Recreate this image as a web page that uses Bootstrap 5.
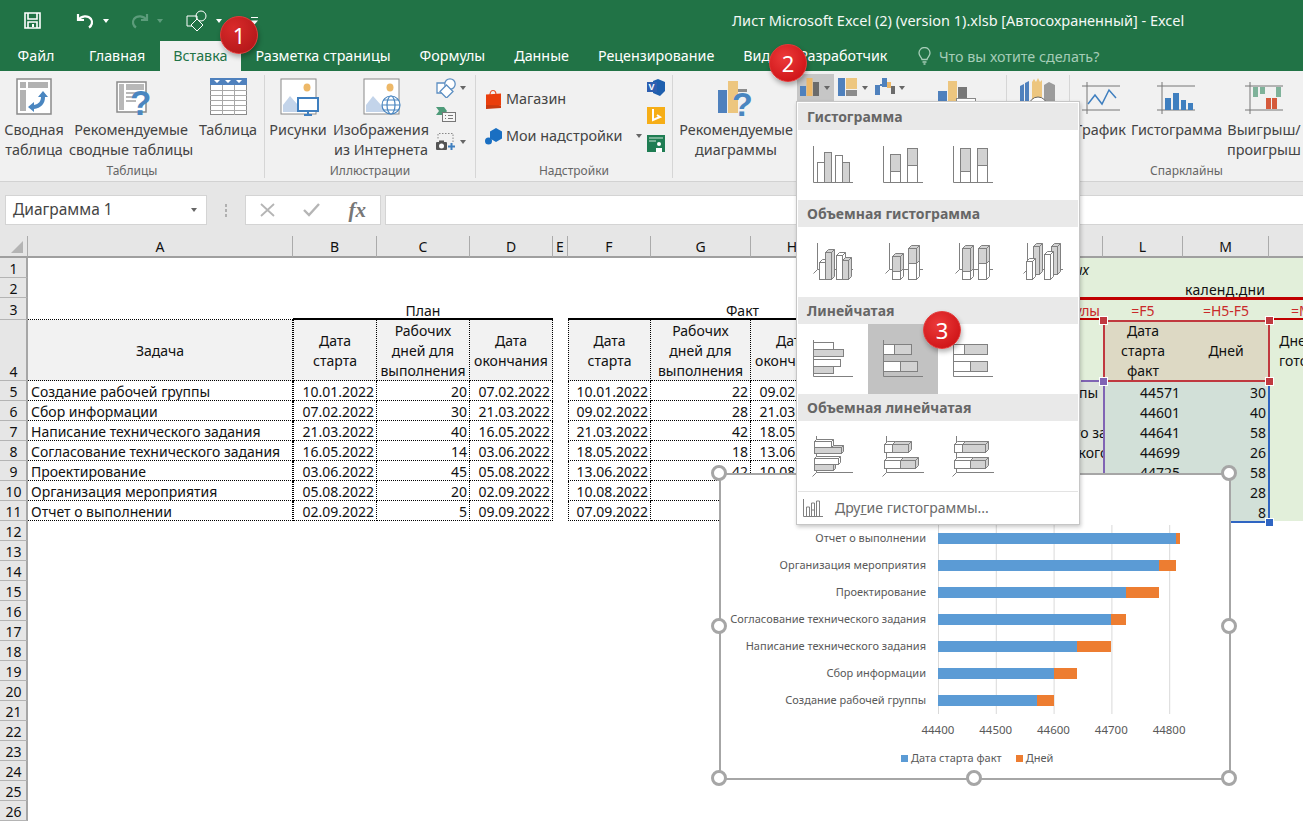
<!DOCTYPE html>
<html lang="ru">
<head>
    <meta charset="UTF-8">
    <title>Лист Microsoft Excel</title>
    <link href="https://cdn.jsdelivr.net/npm/bootstrap@5.3.0/dist/css/bootstrap.min.css" rel="stylesheet">
    <style>
        html, body { margin: 0; background: #fff; overflow: hidden; }
        #xl-app { position: relative; width: 1303px; height: 822px; overflow: hidden; font-family: "Noto Sans", sans-serif; font-size: 13.5px; color: #222; }

        /* title + tabs */
        .xl-title { height: 41px; background: #217346; color: #fff; }
        .xl-qat { width: 732px; flex: none; height: 41px; }
        .xl-title-text { font-size: 14.5px; color: #f4f8f5; white-space: nowrap; }
        .xl-tabs { height: 30px; background: #217346; padding-left: 3px; flex-wrap: nowrap; }
        .xl-tabs .nav-link { padding: 0 14.5px; height: 30px; line-height: 29px; color: #fff; font-size: 14.3px; white-space: nowrap; }
        .xl-tabs .nav-link.active { background: #f1f1f1; color: #217346; padding: 0 13.5px; }
        .xl-tabs .tab-file { padding-right: 20px; }
        .xl-tell { color: #a6cdb8; margin-left: 16px; font-size: 14.3px; line-height: 29px; white-space: nowrap; }
        .xl-qat svg { flex: none; }
        .tiny-arrow { width: 0; height: 0; border-left: 3.5px solid transparent; border-right: 3.5px solid transparent; border-top: 4px solid #fff; flex: none; }
        .tiny-arrow.dim { border-top-color: #5c9c7b; }
        .tiny-arrow.gray { border-top-color: #666; }
        .qm-save { margin-left: 24px; } .qm-undo { margin-left: 35px; } .qm-redo { margin-left: 21px; } .qm-shape { margin-left: 23px; } .qm-more { margin-left: 29px; }

        /* ribbon */
        .xl-ribbon { height: 111px; background: #f1f1f1; border-bottom: 1px solid #d2d2d2; }
        .rb-group { margin-top: 4px; height: 103px; border-right: 1px solid #d6d6d6; flex: none; }
        .rb-body { height: 89px; }
        .rb-name { height: 14px; line-height: 14px; text-align: center; font-size: 12px; color: #666; }
        .rb-big { flex: none; text-align: center; line-height: 20px; font-size: 14.4px; color: #444; white-space: nowrap; }
        .rb-icon { height: 45px; display: flex; justify-content: center; align-items: flex-start; padding-top: 3px; }
        .ico-down { margin-top: 3px; } .ico-right { margin-left: 6px; } .ico-right2 { margin-left: 3px; }
        .g-tables { width: 265px; } .g-pics { width: 211px; } .g-addins { width: 197px; } .g-charts { width: 334px; } .g-tour { width: 63px; } .g-spark { width: 233px; border-right: 0; }
        .b-68 { width: 68px; } .b-126 { width: 126px; } .b-66 { width: 66px; } .b-100 { width: 100px; } .b-61 { width: 61px; } .b-90 { width: 90px; } .b-86 { width: 86px; }
        .b-rec { margin-right: -2px; }
        .rb-small { width: 45px; flex: none; }
        .rb-small-row { padding-left: 5px; gap: 4px; }
        .h-26 { height: 26px; } .h-27 { height: 27px; }
        .addin-list { width: 171px; flex: none; padding: 13px 0 0 9px; gap: 15px; }
        .addin-row { height: 22px; gap: 4px; font-size: 14.4px; color: #444; white-space: nowrap; }
        .addin-row svg { flex: none; }
        .addin-more { margin-left: 10px; }
        .addin-side { width: 22px; flex: none; padding-top: 4px; gap: 11px; }
        .chart-top { flex: none; margin-top: -1px; height: 28px; }
        .chart-pick { height: 27px; padding-top: 4px; gap: 4px; flex: none; }
        .chart-pick.on { background: #c6c6c6; }
        .p1 { width: 37px; padding-left: 3px; } .p2 { width: 36px; padding-left: 4px; } .p3 { width: 38px; padding-left: 5px; }
        .pivot-ico { margin: 7px 0 0 30px; flex: none; }

        /* formula bar */
        .xl-formula { height: 54px; background: #e6e6e6; padding: 13px 0 11px 5px; }
        .fx-box { height: 30px; background: #fff; border: 1px solid #d4d4d4; flex: none; }
        .fx-name { width: 202px; padding: 0 9px 0 7px; color: #444; font-size: 15.5px; }
        .fx-dots { width: 38px; flex: none; gap: 2px; }
        .fx-dots i { width: 2px; height: 3px; background: #b0b0b0; display: block; }
        .fx-btns { width: 136px; padding: 0 14px 0 14px; }
        .fx-mark { font-family: "Liberation Serif", serif; font-size: 21px; color: #777; line-height: 24px; }
        .fx-input { flex: 1; margin-left: 4px; border-right: 0; }

        /* sheet */
        .xl-sheet { table-layout: fixed; border-collapse: separate; border-spacing: 0; width: 1365px; font-size: 14px; line-height: 17px; color: #111; }
        .xl-sheet td, .xl-sheet th { padding: 2px 2px 0; font-weight: 400; white-space: nowrap; overflow: hidden; }
        .xl-sheet .hd { background: #e6e6e6; text-align: center; border-right: 1px solid #ababab; border-bottom: 2px solid #9f9f9f; height: 22px; padding: 1px 0 0; line-height: 19px; }
        .xl-sheet .rh { background: #e6e6e6; text-align: center; border-right: 2px solid #a6a6a6; border-bottom: 1px solid #b4b4b4; padding: 2px 0 0 1px; vertical-align: middle; }
        .xl-sheet .rh.tall { vertical-align: bottom; }
        .xl-sheet .txt { padding-left: 3px; }
        .xl-sheet .tall-cell { padding: 0 2px; }
        .r20 { height: 20px; } .r22 { height: 22px; } .r61 { height: 61px; }
        .corner { position: relative; }
        .corner::after { content: ""; position: absolute; right: 4px; bottom: 3px; border-left: 12px solid transparent; border-bottom: 12px solid #b4b4b4; }
        .dt { border-right: 1px dotted #000; border-bottom: 1px dotted #000; }
        .dt.lf { border-left: 1px dotted #000; }
        .dot-b { border-bottom: 1px dotted #000; }
        .hdc { background: #f2f2f2; text-align: center; }
        .lines { height: 60px; padding-top: 1px; line-height: 20px; }
        .thick { box-shadow: inset 0 -2px 0 #000; }
        .num { text-align: right; }
        .grn { background: #e2efda; text-align: center; }
        .grey-k { background: #dde2dc; }
        .sel-l { background: #d2e0d8; text-align: right; padding-right: 3px !important; }
        .beige { background: #ddd9c4; text-align: center; }
        .red-b { box-shadow: inset 0 -1px 0 #c00000; }
        .red-t { box-shadow: inset 0 2px 0 #c00000; }
        .red-tb { box-shadow: inset 0 2px 0 #c00000, inset 0 -2px 0 #c00000; }
        .redtxt { color: #c92a2a; }
        .wide-txt { letter-spacing: .25px; padding-right: 4px !important; }
        .rng { position: absolute; pointer-events: none; }
        .rng-red { left: 1103px; top: 320px; width: 167px; height: 62px; border: 2px solid #c0393f; }
        .rng-purple { left: 1103px; top: 381px; width: 2px; height: 140px; background: #8064b4; }
        .rng-purple-top { left: 1081px; top: 380px; width: 24px; height: 2px; background: #8064b4; }
        .rng-blue-r { left: 1268px; top: 381px; width: 2px; height: 141px; background: #2f65c2; }
        .rng-blue-b { left: 1105px; top: 521px; width: 165px; height: 2px; background: #2f65c2; }
        .knob { position: absolute; width: 7px; height: 7px; border: 1px solid #fff; box-sizing: content-box; }
        .kb-r { background: #c0393f; } .kb-p { background: #8064b4; } .kb-b { background: #2f65c2; }

        /* chart object */
        .xl-chart { position: absolute; left: 719px; top: 473px; width: 512px; height: 307px; background: #fff; border: 2px solid #a6a6a6; color: #595959; font-size: 11px; }
        .cht-rows { padding-top: 50px; }
        .cht-row { height: 27px; }
        .cht-label { width: 205px; flex: none; text-align: right; white-space: nowrap; line-height: 25px; }
        .cht-track { margin-left: 12px; width: 233px; height: 27px; padding-top: 8px; background: linear-gradient(to right, #d9d9d9 1px, transparent 1px) 0 0 / 57.8px 100%; }
        .cht-bar { height: 11px; flex: none; }
        .c-blue { background: #5b9bd5; } .c-orange { background: #ed7d31; }
        .cht-axis { margin: 6px 0 0 188px; line-height: 20px; font-size: 11.5px; }
        .cht-axis span { width: 57.8px; text-align: center; flex: none; }
        .cht-legend { margin: 8px 0 0 180px; gap: 3px; line-height: 20px; white-space: nowrap; }
        .cht-legend i { width: 7px; height: 7px; display: block; }
        .leg-gap { margin-left: 11px; }
        .grip { position: absolute; width: 16px; height: 16px; border-radius: 50%; background: #fff; border: 3px solid #a6a6a6; }

        /* chart gallery */
        .xl-menu { position: absolute; left: 796px; top: 101px; width: 284px; height: 424px; padding: 1px; margin: 0; background: #fff; border: 1px solid #c6c6c6; border-radius: 0; box-shadow: 1px 2px 4px rgba(0,0,0,.22); display: block; z-index: 5; }
        .xl-menu .dropdown-header { height: 27px; padding: 1px 0 0 9px; line-height: 25px; background: #e9e9e9; color: #666; font-weight: 700; font-size: 14px; }
        .xl-menu .sect { height: 70px; }
        .mn-cell { width: 70px; height: 70px; flex: none; }
        .mn-cell.hit { background: #c2c2c2; }
        .mn-foot { border-top: 1px solid #e3e3e3; height: 32px; color: #6a6a6a; font-size: 14px; padding-left: 5px; gap: 12px; }

        /* callout numbers */
        .step-no { position: absolute; width: 38px; height: 38px; color: #fff; font-size: 22px; background: radial-gradient(circle at 40% 35%, #ec3a3a, #cf1518 78%); box-shadow: 1px 3px 5px rgba(0,0,0,.3); border: 1px solid #e23a3a; z-index: 9; }
        .st1 { left: 220px; top: 16px; background: radial-gradient(circle at 35% 30%, #d92a2a, #b5181a 80%); } .st2 { left: 769px; top: 44px; } .st3 { left: 923px; top: 311px; }
    </style>
</head>
<body>
<div id="xl-app">

    <!-- title bar -->
    <div class="xl-title d-flex align-items-center">
        <div class="xl-qat d-flex align-items-center">
            <svg class="qm-save" width="17" height="17" viewBox="0 0 17 17" fill="none" stroke="#fff" stroke-width="1.6"><path d="M1 1h15v15H1z"/><path d="M4 1v6h9V1M4 16v-6h9v6"/><path d="M9 12v3" stroke-width="2"/></svg>
            <svg class="qm-undo" width="19" height="17" viewBox="0 0 19 17" fill="none" stroke="#fff" stroke-width="2.2"><path d="M2 2v6h6"/><path d="M2.5 8C5 3.5 12 3 15 7c2 3 1 6.500-2 8.500"/></svg>
            <span class="tiny-arrow ms-2"></span>
            <svg class="qm-redo" width="19" height="17" viewBox="0 0 19 17" fill="none" stroke="#5c9c7b" stroke-width="2.2"><path d="M17 2v6h-6"/><path d="M16.500 8C14 3.500 7 3 4 7c-2 3-1 6.500 2 8.500"/></svg>
            <span class="tiny-arrow dim ms-2"></span>
            <svg class="qm-shape" width="22" height="22" viewBox="0 0 22 22" fill="none" stroke="#fff" stroke-width="1"><path d="M1 6h10v10H1z"/><circle cx="15" cy="6" r="5"/><path d="M11 9l6 6-6 6-6-6z" fill="#217346"/></svg>
            <span class="tiny-arrow ms-2"></span>
            <svg class="qm-more" width="7" height="8" viewBox="0 0 7 8" fill="#fff"><rect width="7" height="1"/><path d="M0 3.500h7L3.500 7.500z"/></svg>
        </div>
        <div class="xl-title-text">Лист Microsoft Excel (2) (version 1).xlsb [Автосохраненный] - Excel</div>
    </div>

    <!-- tabs -->
    <ul class="nav xl-tabs align-items-center">
        <li class="nav-item"><a class="nav-link tab-file" href="#">Файл</a></li>
        <li class="nav-item"><a class="nav-link" href="#">Главная</a></li>
        <li class="nav-item"><a class="nav-link active" href="#">Вставка</a></li>
        <li class="nav-item"><a class="nav-link" href="#">Разметка страницы</a></li>
        <li class="nav-item"><a class="nav-link" href="#">Формулы</a></li>
        <li class="nav-item"><a class="nav-link" href="#">Данные</a></li>
        <li class="nav-item"><a class="nav-link" href="#">Рецензирование</a></li>
        <li class="nav-item"><a class="nav-link" href="#">Вид</a></li>
        <li class="nav-item"><a class="nav-link" href="#">Разработчик</a></li>
        <li class="d-flex align-items-center xl-tell">
            <svg class="me-2" width="13" height="18" viewBox="0 0 13 18" fill="none" stroke="#a6cdb8" stroke-width="1.300"><path d="M4 12.500C3.500 10 1 9 1 6a5.500 5.500 0 0 1 11 0c0 3-2.500 4-3 6.500z"/><path d="M4.500 15h4M5.500 17h2"/></svg>
            Что вы хотите сделать?
        </li>
    </ul>

    <!-- ribbon -->
    <div class="xl-ribbon d-flex">
        <div class="rb-group g-tables">
            <div class="rb-body d-flex">
                <div class="rb-big b-68"><div class="rb-icon">
                    <svg width="36" height="37" viewBox="0 0 36 37"><rect x="1" y="1" width="34" height="35" fill="#fff" stroke="#8a8a8a" stroke-width="1.500"/><path d="M4 4h6v6H4zM12 4h20v6H12zM4 12h6v21H4z" fill="#b2b2b2"/><path d="M27 13l-5 6h3c0 4-2 7-7 8v-3l-6 5 6 5v-3c7-1 11-5 11-12h3z" fill="#4a86c0"/></svg>
                </div><div>Сводная<br>таблица</div></div>
                <div class="rb-big b-126"><div class="rb-icon">
                    <svg class="ico-right ico-down" width="36" height="36" viewBox="0 0 36 36"><rect x="1" y="1" width="29" height="30" fill="#fff" stroke="#8a8a8a" stroke-width="1.500"/><path d="M3 3h5v26H3zM10 3h18v6H10zM10 11h12v2H10zM10 15h10v2H10zM10 19h10v2H10z" fill="#b8b8b8"/><text x="14" y="34" font-family="Liberation Sans, sans-serif" font-weight="700" font-size="35" fill="#4a86c0">?</text></svg>
                </div><div>Рекомендуемые<br>сводные таблицы</div></div>
                <div class="rb-big b-68"><div class="rb-icon">
                    <svg width="37" height="37" viewBox="0 0 37 37"><rect x="0.500" y="0.500" width="36" height="36" fill="#fff" stroke="#8a8a8a"/><rect width="37" height="7" fill="#4f81bd"/><path d="M0 12.500h37M0 17.500h37M0 22.500h37M0 27.500h37M0 32.500h37M12.500 7v30M24.500 7v30" stroke="#a8a8a8" fill="none"/><path d="M4 2h6l-3 3zM15 2h6l-3 3zM26 2h6l-3 3z" fill="#fff"/></svg>
                </div><div>Таблица</div></div>
            </div>
            <div class="rb-name">Таблицы</div>
        </div>

        <div class="rb-group g-pics">
            <div class="rb-body d-flex">
                <div class="rb-big b-66"><div class="rb-icon">
                    <svg class="ico-right2" width="40" height="38" viewBox="0 0 40 38"><rect x="1" y="1" width="35" height="35" fill="#fff" stroke="#8a8a8a"/><ellipse cx="27" cy="9.500" rx="3.500" ry="4" fill="#edb868"/><path d="M3 34V27l7-9 8 9 6 7z" fill="#c3d4ea"/><rect x="18" y="20" width="20" height="13" fill="#fff" stroke="#3f7fbf" stroke-width="2"/><path d="M28 33v3M24 37h8" stroke="#3f7fbf" stroke-width="2"/></svg>
                </div><div>Рисунки</div></div>
                <div class="rb-big b-100"><div class="rb-icon">
                    <svg class="ico-right2" width="40" height="38" viewBox="0 0 40 38"><rect x="1" y="1" width="35" height="35" fill="#fff" stroke="#8a8a8a"/><ellipse cx="27" cy="9.500" rx="3.500" ry="4" fill="#edb868"/><path d="M3 34V27l7-9 8 9 6 7z" fill="#c3d4ea"/><g fill="#fff" stroke="#4a86c0" stroke-width="1.200"><circle cx="28" cy="27" r="9"/><ellipse cx="28" cy="27" rx="4" ry="9"/><path d="M19 27h18M20.500 22h15M20.500 32h15" fill="none"/></g></svg>
                </div><div>Изображения<br>из Интернета</div></div>
                <div class="rb-small d-flex flex-column">
                    <div class="rb-small-row h-26 d-flex align-items-center">
                        <svg width="20" height="20" viewBox="0 0 20 20" fill="#fff" stroke="#5d8fc2" stroke-width="1.300"><path d="M1 5h10v10H1z"/><circle cx="14" cy="6" r="5.200"/><path d="M10.500 7l6.500 6.500L10.500 20 4 13.500z" fill="#fff"/></svg><span class="tiny-arrow gray"></span>
                    </div>
                    <div class="rb-small-row h-27 d-flex align-items-center">
                        <svg width="20" height="15" viewBox="0 0 20 15"><path d="M0 0h8l3 4-3 4H0l3-4z" fill="#4e9b79"/><rect x="6.500" y="5.500" width="13" height="9" fill="#f6f6f6" stroke="#777"/><path d="M9 8.500h1M9 11.500h1M12 8.500h5M12 11.500h5" stroke="#777"/></svg>
                    </div>
                    <div class="rb-small-row h-27 d-flex align-items-center">
                        <svg width="20" height="18" viewBox="0 0 20 18"><path d="M3 .5h14v10" fill="none" stroke="#888" stroke-dasharray="1.500 1.500"/><path d="M2 1v6" stroke="#888" stroke-dasharray="1.500 1.500"/><rect x="0" y="9" width="11" height="8" rx="1" fill="#555"/><rect x="3" y="7.500" width="5" height="2" fill="#555"/><circle cx="5.500" cy="13" r="2.500" fill="#fff"/><path d="M12 13.500h7M15.500 10v7" stroke="#3f7fbf" stroke-width="2"/></svg><span class="tiny-arrow gray"></span>
                    </div>
                </div>
            </div>
            <div class="rb-name">Иллюстрации</div>
        </div>

        <div class="rb-group g-addins">
            <div class="rb-body d-flex">
                <div class="addin-list d-flex flex-column">
                    <div class="addin-row d-flex align-items-center">
                        <svg width="17" height="20" viewBox="0 0 17 20"><path d="M5 6c0-6 6-6 6 0" fill="none" stroke="#e9542c" stroke-width="1.200"/><path d="M1 5.500l15-1v12l-15 3z" fill="#ea3e0c"/><path d="M1 16l15 .5v2.500l-15 1z" fill="#c93a10"/></svg>Магазин
                    </div>
                    <div class="addin-row d-flex align-items-center">
                        <svg width="17" height="17" viewBox="0 0 17 17"><path d="M11 0l6 3.500v7L11 14l-6-3.500v-7z" fill="#1a6fc2"/><circle cx="3.500" cy="13" r="3.500" fill="#1a6fc2"/></svg>Мои надстройки<span class="tiny-arrow gray addin-more"></span>
                    </div>
                </div>
                <div class="addin-side d-flex flex-column">
                    <svg width="18" height="17" viewBox="0 0 18 17"><path d="M6 2l5-2 7 3v9l-5 5-7-3z" fill="#1e5fae"/><rect y="3" width="10" height="10" fill="#2e5fb0"/><text x="1.500" y="11" font-family="Liberation Sans, sans-serif" font-size="9" font-weight="700" fill="#fff">V</text></svg>
                    <svg width="18" height="17" viewBox="0 0 18 17"><rect width="18" height="17" fill="#f6ae17"/><path d="M6 2v11l7-3-3-2" fill="none" stroke="#fff" stroke-width="2"/></svg>
                    <svg width="18" height="17" viewBox="0 0 18 17"><rect width="18" height="17" fill="#1f7d53"/><path d="M2 3h14M2 6h7" stroke="#cfe7da"/><circle cx="12" cy="9" r="2" fill="#fff"/><path d="M9 17v-4h6v4z" fill="#fff"/></svg>
                </div>
            </div>
            <div class="rb-name">Надстройки</div>
        </div>

        <div class="rb-group g-charts">
            <div class="rb-body d-flex">
                <div class="rb-big b-126 b-rec"><div class="rb-icon">
                    <svg class="ico-down" width="36" height="38" viewBox="0 0 36 38"><rect y="9" width="9" height="23" fill="#4f81bd"/><rect x="10" y="0" width="10" height="32" fill="#edc67f"/><rect x="20" y="8" width="9" height="3" fill="#8c8c8c"/><text x="14" y="35" font-family="Liberation Sans, sans-serif" font-weight="700" font-size="34" fill="#4a86c0">?</text></svg>
                </div><div>Рекомендуемые<br>диаграммы</div></div>
                <div class="chart-top d-flex">
                    <div class="chart-pick on p1 d-flex align-items-start">
                        <svg width="20" height="18" viewBox="0 0 20 18"><rect y="8" width="6" height="10" fill="#4f81bd"/><rect x="6.500" width="6" height="18" fill="#edb868"/><rect x="13" y="4" width="6" height="14" fill="#6b6b6b"/></svg><span class="tiny-arrow gray mt-2"></span>
                    </div>
                    <div class="chart-pick p2 d-flex align-items-start">
                        <svg width="20" height="18" viewBox="0 0 20 18"><rect width="7" height="18" fill="#4f81bd"/><rect x="8" width="11" height="11" fill="#edc67f"/><rect x="8" y="12" width="11" height="6" fill="#8c8c8c"/></svg><span class="tiny-arrow gray mt-2"></span>
                    </div>
                    <div class="chart-pick p3 d-flex align-items-start">
                        <svg width="20" height="18" viewBox="0 0 20 18"><path d="M0 7h5v10H0z" fill="#4f81bd"/><path d="M5 6h3v2H5z" fill="#4f81bd"/><path d="M7 0h5v9H7z" fill="#4f81bd"/><path d="M12 4h4v6h-4z" fill="#edb868"/><path d="M16 8h4v8h-4z" fill="#6b6b6b"/></svg><span class="tiny-arrow gray mt-2"></span>
                    </div>
                    <svg class="pivot-ico" width="38" height="22" viewBox="0 0 38 22"><rect y="10" width="9" height="12" fill="#4f81bd"/><rect x="10" width="9" height="22" fill="#edc67f"/><rect x="20" y="6" width="9" height="16" fill="#777"/><rect x="18.500" y="17.500" width="19" height="5" fill="#fff" stroke="#888"/></svg>
                </div>
            </div>
            <div class="rb-name">&nbsp;</div>
        </div>

        <div class="rb-group g-tour">
            <div class="rb-body d-flex justify-content-center">
                <div class="rb-icon">
                    <svg width="36" height="38" viewBox="0 0 36 38"><path d="M0 8l4-2v32H0zM5 5l4-2v35H5z" fill="#4f81bd"/><path d="M12 4l2-3 2 3 2-4 2 4 2-2v36H12z" fill="#edc67f"/><path d="M24 7l5-3 6 3v31H24z" fill="#9c9c9c"/><circle cx="18" cy="28" r="9" fill="#fff" stroke="#666"/></svg>
                </div>
            </div>
            <div class="rb-name">&nbsp;</div>
        </div>

        <div class="rb-group g-spark">
            <div class="rb-body d-flex">
                <div class="rb-big b-61"><div class="rb-icon">
                    <svg width="38" height="36" viewBox="0 0 38 36" fill="none"><path d="M0 8h38M0 32h38M5 4v32" stroke="#777"/><path d="M6 26l7-9 7 9 7-14 7 8" stroke="#3f7fbf" stroke-width="1.500"/></svg>
                </div><div>График</div></div>
                <div class="rb-big b-90"><div class="rb-icon">
                    <svg width="38" height="36" viewBox="0 0 38 36" fill="none"><path d="M0 8h38M0 32h38M5 4v32" stroke="#777"/><path d="M8 20h6v12H8zM16 15h6v17h-6zM24 22h5v10h-5zM31 25h5v7h-5z" fill="#3f7fbf"/></svg>
                </div><div>Гистограмма</div></div>
                <div class="rb-big b-86"><div class="rb-icon">
                    <svg width="38" height="36" viewBox="0 0 38 36" fill="none"><path d="M0 8h38M0 32h38M5 4v32" stroke="#777"/><path d="M8 9h5v10H8zM15 9h5v7h-5zM31 9h5v10h-5z" fill="#7fb29a"/><path d="M21 20h5v11h-5zM27 20h5v11h-5z" fill="#d55a3c"/></svg>
                </div><div>Выигрыш/<br>проигрыш</div></div>
            </div>
            <div class="rb-name">Спарклайны</div>
        </div>
    </div>

    <!-- formula bar -->
    <div class="xl-formula d-flex align-items-stretch">
        <div class="fx-box fx-name d-flex align-items-center justify-content-between">Диаграмма 1<span class="tiny-arrow gray"></span></div>
        <div class="fx-dots d-flex flex-column align-items-center justify-content-center"><i></i><i></i><i></i></div>
        <div class="fx-box fx-btns d-flex align-items-center justify-content-between">
            <svg width="15" height="14" viewBox="0 0 15 14" stroke="#b5b5b5" stroke-width="1.800" fill="none"><path d="M1 1l13 12M14 1L1 13"/></svg>
            <svg width="17" height="14" viewBox="0 0 17 14" stroke="#b5b5b5" stroke-width="2.400" fill="none"><path d="M1 7l5 5L16 1"/></svg>
            <span class="fst-italic fw-bold fx-mark">fx</span>
        </div>
        <div class="fx-box fx-input"></div>
    </div>

    <!-- sheet -->
    <table class="xl-sheet" id="sheet">
        <colgroup>
            <col style="width:28px"><col style="width:265px"><col style="width:84px"><col style="width:93px"><col style="width:83px"><col style="width:15px"><col style="width:83px"><col style="width:100px"><col style="width:83px"><col style="width:83px"><col style="width:186px"><col style="width:80px"><col style="width:86px"><col style="width:96px">
        </colgroup>
        <thead>
            <tr>
                <th class="hd corner"></th><th class="hd">A</th><th class="hd">B</th><th class="hd">C</th><th class="hd">D</th><th class="hd">E</th><th class="hd">F</th><th class="hd">G</th><th class="hd">H</th><th class="hd">I</th><th class="hd">K</th><th class="hd">L</th><th class="hd">M</th><th class="hd"></th>
            </tr>
        </thead>
        <tbody id="sheetBody">
            <tr class="r20"><td class="rh">1</td><td colspan="9"></td><td class="grn text-end fst-italic" style="padding-right:14px">числовых</td><td class="grn"></td><td class="grn"></td><td class="grn"></td></tr>
            <tr class="r20"><td class="rh">2</td><td colspan="9"></td><td class="grn red-b"></td><td class="grn red-b"></td><td class="grn red-b text-end wide-txt">календ.дни</td><td class="grn red-b"></td></tr>
            <tr class="r22"><td class="rh">3</td><td class="dot-b"></td><td colspan="3" class="text-center thick">План</td><td></td><td colspan="4" class="text-center thick">Факт</td>
                <td class="grn red-tb redtxt text-end" style="padding-right:3px">формулы</td><td class="grn red-t redtxt">=F5</td><td class="grn red-t redtxt">=H5-F5</td><td class="grn red-tb redtxt">=M5+L5</td></tr>
            <tr class="r61"><td class="rh tall">4</td>
                <td class="tall-cell hdc dt"><div class="lines d-flex align-items-center justify-content-center">Задача</div></td>
                <td class="tall-cell hdc dt lf"><div class="lines d-flex align-items-center justify-content-center"><span>Дата<br>старта</span></div></td>
                <td class="tall-cell hdc dt"><div class="lines d-flex align-items-center justify-content-center"><span>Рабочих<br>дней для<br>выполнения</span></div></td>
                <td class="tall-cell hdc dt"><div class="lines d-flex align-items-center justify-content-center"><span>Дата<br>окончания</span></div></td>
                <td></td>
                <td class="tall-cell hdc dt lf"><div class="lines d-flex align-items-center justify-content-center"><span>Дата<br>старта</span></div></td>
                <td class="tall-cell hdc dt"><div class="lines d-flex align-items-center justify-content-center"><span>Рабочих<br>дней для<br>выполнения</span></div></td>
                <td class="tall-cell hdc dt"><div class="lines d-flex align-items-center justify-content-center"><span>Дата<br>окончания</span></div></td>
                <td></td>
                <td class="grn"></td>
                <td class="tall-cell beige"><div class="lines d-flex align-items-center justify-content-center"><span>Дата<br>старта<br>факт</span></div></td>
                <td class="tall-cell beige"><div class="lines d-flex align-items-center justify-content-center">Дней</div></td>
                <td class="tall-cell grn"><div class="lines d-flex align-items-center justify-content-center"><span>Дней всего<br>готовности</span></div></td>
            </tr>
        </tbody>
    </table>

    <!-- coloured range frames around the chart source -->
    <div class="rng rng-red"></div>
    <div class="rng rng-purple"></div>
    <div class="rng rng-purple-top"></div>
    <div class="rng rng-blue-r"></div>
    <div class="rng rng-blue-b"></div>
    <span class="knob kb-r" style="left:1099px;top:316px"></span>
    <span class="knob kb-r" style="left:1265px;top:316px"></span>
    <span class="knob kb-p" style="left:1099px;top:377px"></span>
    <span class="knob kb-r" style="left:1265px;top:377px"></span>
    <span class="knob kb-b" style="left:1265px;top:518px"></span>

    <!-- chart object -->
    <div class="xl-chart">
        <div class="cht-rows" id="chtRows"></div>
        <div class="cht-axis d-flex"><span>44400</span><span>44500</span><span>44600</span><span>44700</span><span>44800</span></div>
        <div class="cht-legend d-flex align-items-center"><i class="c-blue"></i>Дата старта факт<i class="c-orange leg-gap"></i>Дней</div>
        <span class="grip" style="left:-10px;top:-10px"></span>
        <span class="grip" style="left:245px;top:-10px"></span>
        <span class="grip" style="left:500px;top:-10px"></span>
        <span class="grip" style="left:-10px;top:143px"></span>
        <span class="grip" style="left:500px;top:143px"></span>
        <span class="grip" style="left:-10px;top:295px"></span>
        <span class="grip" style="left:245px;top:295px"></span>
        <span class="grip" style="left:500px;top:295px"></span>
    </div>

    <!-- chart gallery -->
    <div class="dropdown-menu show xl-menu">
        <h6 class="dropdown-header">Гистограмма</h6>
        <div class="sect d-flex" id="mnCols"></div>
        <h6 class="dropdown-header">Объемная гистограмма</h6>
        <div class="sect d-flex" id="mnCols3d"></div>
        <h6 class="dropdown-header">Линейчатая</h6>
        <div class="sect d-flex" id="mnBars"></div>
        <h6 class="dropdown-header">Объемная линейчатая</h6>
        <div class="sect d-flex" id="mnBars3d"></div>
        <div class="mn-foot d-flex align-items-center">
            <svg width="20" height="18" viewBox="0 0 20 18" fill="none" stroke="#808080"><path d="M.500 0v17.500H20"/><path d="M3.500 17V8h3v9M8.500 17V11h3v6M13.500 17V2h3v15M8.500 17V4h3v7"/></svg>
            <span>Дру<u>г</u>ие гистограммы...</span>
        </div>
    </div>

    <!-- step numbers -->
    <div class="step-no st1 rounded-circle d-flex align-items-center justify-content-center">1</div>
    <div class="step-no st2 rounded-circle d-flex align-items-center justify-content-center">2</div>
    <div class="step-no st3 rounded-circle d-flex align-items-center justify-content-center">3</div>
</div>

<script src="https://cdn.jsdelivr.net/npm/bootstrap@5.3.0/dist/js/bootstrap.bundle.min.js"></script>
<script>
    // === Sheet rows ===
    const tasks = [
        ['Создание рабочей группы', '10.01.2022', 20, '07.02.2022', '10.01.2022', 22, '09.02.2022', 44571, 30],
        ['Сбор информации', '07.02.2022', 30, '21.03.2022', '09.02.2022', 28, '21.03.2022', 44601, 40],
        ['Написание технического задания', '21.03.2022', 40, '16.05.2022', '21.03.2022', 42, '18.05.2022', 44641, 58],
        ['Согласование технического задания', '16.05.2022', 14, '03.06.2022', '18.05.2022', 18, '13.06.2022', 44699, 26],
        ['Проектирование', '03.06.2022', 45, '05.08.2022', '13.06.2022', 42, '10.08.2022', 44725, 58],
        ['Организация мероприятия', '05.08.2022', 20, '02.09.2022', '10.08.2022', 20, '07.09.2022', 44783, 28],
        ['Отчет о выполнении', '02.09.2022', 5, '09.09.2022', '07.09.2022', 4, '13.09.2022', 44811, 8]
    ];

    const body = document.getElementById('sheetBody');
    tasks.forEach((t, i) => {
        const tr = document.createElement('tr');
        tr.className = 'r20';
        tr.innerHTML = `
            <td class="rh">${i + 5}</td>
            <td class="dt txt">${t[0]}</td><td class="dt lf num">${t[1]}</td><td class="dt num">${t[2]}</td><td class="dt num">${t[3]}</td>
            <td></td>
            <td class="dt lf num">${t[4]}</td><td class="dt num">${t[5]}</td><td class="dt num">${t[6]}</td>
            <td></td>
            <td class="grey-k">${t[0]}</td>
            <td class="sel-l">${t[7]}</td><td class="sel-l">${t[8]}</td><td class="grn"></td>`;
        body.appendChild(tr);
    });
    for (let n = 12; n <= 26; n++) {
        const tr = document.createElement('tr');
        tr.className = 'r20';
        tr.innerHTML = `<td class="rh">${n}</td><td colspan="13"></td>`;
        body.appendChild(tr);
    }

    // === Chart bars ===
    const pxPerDay = 0.578;
    const chtRows = document.getElementById('chtRows');
    [...tasks].reverse().forEach(t => {
        const row = document.createElement('div');
        row.className = 'cht-row d-flex';
        row.innerHTML = `
            <div class="cht-label">${t[0]}</div>
            <div class="cht-track d-flex">
                <div class="cht-bar c-blue" style="width:${((t[7] - 44400) * pxPerDay).toFixed(1)}px"></div>
                <div class="cht-bar c-orange" style="width:${(t[8] * pxPerDay).toFixed(1)}px"></div>
            </div>`;
        chtRows.appendChild(row);
    });

    // === Gallery icons ===
    const ST = '#808080', GR = '#d2d2d2';
    const rect = (x, y, w, h, f) => `<rect x="${x}" y="${y}" width="${w}" height="${h}" fill="${f}" stroke="${ST}"/>`;
    const axis = (x, top, bot, right) => `<path d="M${x} ${top}V${bot}H${right}" fill="none" stroke="${ST}"/>`;
    const box3d = (x, y, w, h, f, d = 3) =>
        `<path d="M${x} ${y}l${d} ${-d}h${w}v${h}l${-d} ${d}M${x + w} ${y}l${d} ${-d}" fill="${f}" stroke="${ST}"/>` + rect(x, y, w, h, f);
    const axis3d = (x, top, bot, right) =>
        `<path d="M${x} ${top}V${bot}H${right}M${x} ${bot}l-4 4" fill="none" stroke="${ST}"/>`;
    const svg = inner => `<svg width="70" height="70" viewBox="0 0 70 70">${inner}</svg>`;

    const galleries = {
        mnCols: [
            axis(15.5, 16, 52.5, 55) + rect(19.5, 32.5, 7, 20, '#fff') + rect(26.5, 22.500, 7, 30, GR) + rect(37.5, 25.500, 7, 27, '#fff') + rect(44.5, 32.5, 7, 20, GR),
            axis(15.5, 16, 52.5, 55) + rect(22.5, 24.5, 10, 17, GR) + rect(22.5, 41.5, 10, 11, '#fff') + rect(39.5, 18.5, 10, 17, GR) + rect(39.5, 35.5, 10, 17, '#fff'),
            axis(15.5, 16, 52.5, 55) + rect(22.5, 18.5, 10, 23, GR) + rect(22.5, 41.5, 10, 11, '#fff') + rect(39.5, 18.5, 10, 17, GR) + rect(39.5, 35.5, 10, 17, '#fff')
        ],
        mnCols3d: [
            axis3d(19.5, 16, 42.5, 55) + box3d(21.5, 35.5, 6, 17, '#fff') + box3d(27.5, 25.5, 6, 27, GR) + box3d(38.5, 28.5, 6, 24, '#fff') + box3d(44.5, 33.5, 6, 19, GR),
            axis3d(21.5, 16, 42.5, 55) + box3d(24.5, 44.5, 8, 8, '#fff') + box3d(24.5, 29.5, 8, 15, GR) + box3d(40.5, 36.5, 8, 16, '#fff') + box3d(40.5, 21.5, 8, 15, GR),
            axis3d(21.5, 16, 42.5, 55) + box3d(24.5, 44.5, 8, 8, '#fff') + box3d(24.5, 21.5, 8, 23, GR) + box3d(40.5, 36.5, 8, 16, '#fff') + box3d(40.5, 21.5, 8, 15, GR),
            axis3d(19.5, 16, 42.5, 55) + box3d(25.5, 19.5, 6, 28, GR) + box3d(43.5, 19.5, 6, 28, GR) + box3d(18.5, 34.5, 6, 18, '#fff') + box3d(36.5, 27.5, 6, 25, '#fff')
        ],
        mnBars: [
            axis(15.5, 16, 52.5, 55) + rect(15.5, 18.5, 20, 7, '#fff') + rect(15.5, 25.5, 30, 7, GR) + rect(15.5, 35.5, 27, 7, '#fff') + rect(15.5, 42.5, 20, 7, GR),
            axis(15.5, 16, 52.5, 55) + rect(15.5, 20.5, 11, 10, '#fff') + rect(26.5, 20.5, 17, 10, GR) + rect(15.5, 37.5, 17, 10, '#fff') + rect(32.5, 37.5, 17, 10, GR),
            axis(15.5, 16, 52.5, 55) + rect(15.5, 20.5, 11, 10, '#fff') + rect(26.5, 20.5, 23, 10, GR) + rect(15.5, 37.5, 17, 10, '#fff') + rect(32.5, 37.5, 17, 10, GR)
        ],
        mnBars3d: [
            axis3d(18.5, 15, 51.5, 55) + box3d(16.5, 26.5, 27, 6, GR, 2) + box3d(16.5, 20.5, 17, 6, '#fff', 2) + box3d(16.5, 43.5, 19, 6, GR, 2) + box3d(16.5, 37.5, 24, 6, '#fff', 2),
            axis3d(18.5, 15, 51.5, 56) + box3d(16.5, 23.5, 8, 8, '#fff') + box3d(24.5, 23.5, 16, 8, GR) + box3d(16.5, 39.5, 16, 8, '#fff') + box3d(32.5, 39.5, 15, 8, GR),
            axis3d(18.5, 15, 51.5, 56) + box3d(16.5, 23.5, 8, 8, '#fff') + box3d(24.5, 23.5, 23, 8, GR) + box3d(16.5, 39.5, 16, 8, '#fff') + box3d(32.5, 39.5, 15, 8, GR)
        ]
    };
    for (const id in galleries) {
        const holder = document.getElementById(id);
        galleries[id].forEach((inner, i) => {
            const cell = document.createElement('div');
            cell.className = 'mn-cell';
            if (id === 'mnBars' && i === 1) cell.classList.add('hit');
            cell.innerHTML = svg(inner);
            holder.appendChild(cell);
        });
    }
</script>
</body>
</html>
